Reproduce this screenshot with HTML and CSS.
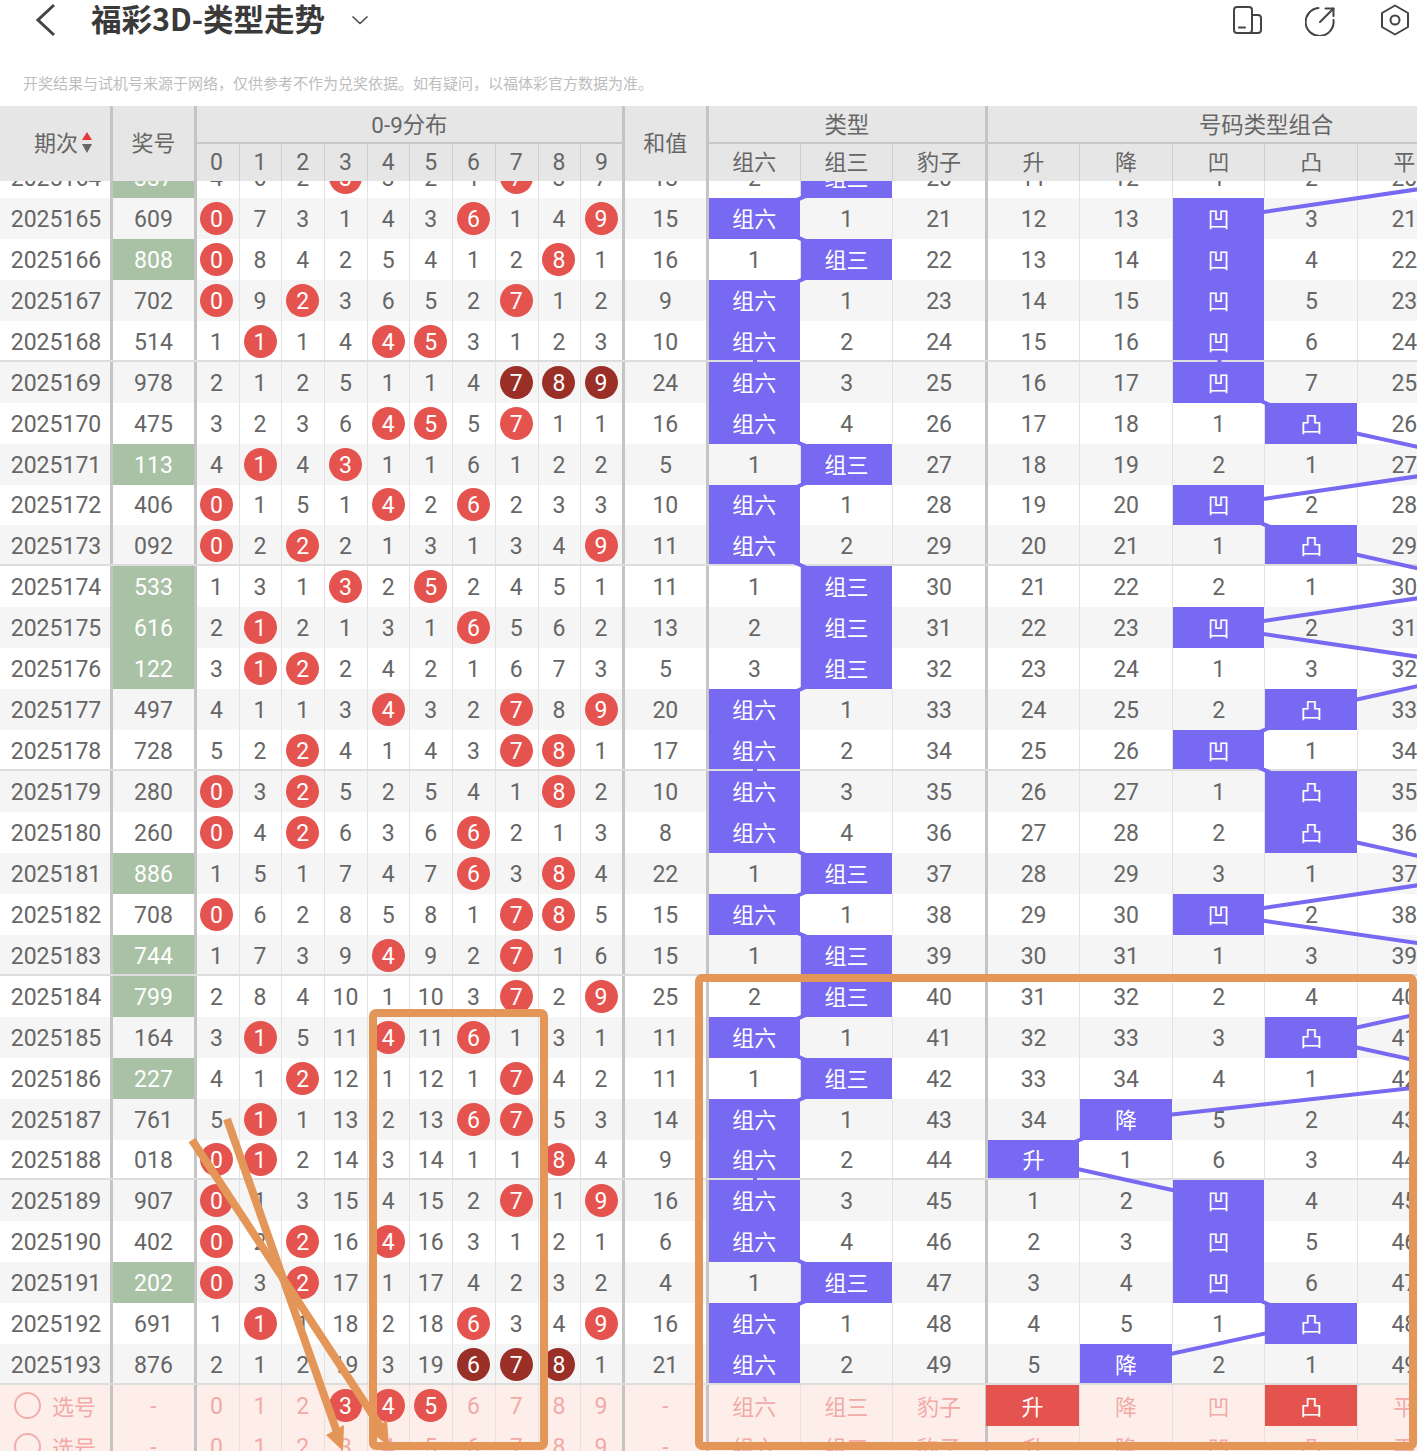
FILE: index.html
```html
<!DOCTYPE html>
<html lang="zh-CN">
<head>
  <meta charset="UTF-8" />
  <meta name="viewport" content="width=device-width, initial-scale=1" />
  <title>福彩3D-类型走势</title>
  <link rel="stylesheet" href="styles.css">
</head>
<body>
  <div class="page">
    <header class="topbar">
      <svg class="icon-back" viewBox="0 0 20 34"><path d="M18 2 L2 17 L18 32" /></svg>
      <h1 class="title">福彩3D-类型走势</h1>
      <svg class="icon-caret" viewBox="0 0 18 10"><path d="M1.5 1.5 L9 8.5 L16.5 1.5" /></svg>
      <div class="actions">
        <svg class="icon-action" viewBox="0 0 30 30">
          <rect x="2" y="2" width="18" height="26" rx="3" />
          <path d="M20 10 H26 Q29 10 29 13 V25 Q29 28 26 28 H17" />
          <path d="M7 22.5 H13" />
        </svg>
        <svg class="icon-action share" viewBox="0 0 30 30">
          <path d="M13.5 3 A14 14 0 1 0 28.5 15" />
          <path d="M15 17 L28.5 3.5" />
          <path d="M20.5 3.5 H28.5 V11" />
        </svg>
        <svg class="icon-action" viewBox="0 0 30 32">
          <path d="M15 1.5 L28 9 V23 L15 30.5 L2 23 V9 Z" />
          <circle cx="15" cy="16" r="4.5" />
        </svg>
      </div>
    </header>

    <p class="notice">开奖结果与试机号来源于网络，仅供参考不作为兑奖依据。如有疑问，以福体彩官方数据为准。</p>

    <section class="trend">
      <div class="head">
        <div class="hcell cn tall sep issue">期次<span class="sort"><i class="up"></i><i class="down"></i></span></div>
        <div class="hcell cn tall sep">奖号</div>
        <div class="hcell group span-10 sep">0-9分布</div>
        <div class="hcell cn tall sep">和值</div>
        <div class="hcell group span-3 sep">类型</div>
        <div class="hcell group span-6">号码类型组合</div>

        <div class="hcell num first">0</div><div class="hcell num">1</div><div class="hcell num">2</div><div class="hcell num">3</div><div class="hcell num">4</div>
        <div class="hcell num">5</div><div class="hcell num">6</div><div class="hcell num">7</div><div class="hcell num">8</div><div class="hcell sep">9</div>
        <div class="hcell cn">组六</div><div class="hcell cn">组三</div><div class="hcell cn sep">豹子</div>
        <div class="hcell cn">升</div><div class="hcell cn">降</div><div class="hcell cn">凹</div><div class="hcell cn">凸</div><div class="hcell cn">平</div><div class="hcell"></div>
      </div>
      <div class="body">
        <div class="rows" id="rows">
          <svg class="links" id="links"></svg>
        </div>
      </div>
    </section>

    <!-- hand drawn marks on top of the chart -->
    <svg class="marks" viewBox="0 0 1417 1451">
      <rect x="373" y="1013" width="171" height="433" rx="3" />
      <rect x="699" y="978" width="714" height="468" rx="3" />
      <path d="M192 1140 L384 1432" />
      <path d="M227 1119 L338 1435" />
      <polygon points="326,1435 344,1425 343,1451" />
      <polygon points="370,1432 387,1420 389,1446" />
    </svg>
  </div>
  <script src="table.js"></script>
</body>
</html>
```

FILE: styles.css
```css
/* Reset and base */
*, *::before, *::after {
  box-sizing: border-box;
}
html, body {
  margin: 0;
  padding: 0;
  background: #fff;
  font-family: Roboto, "Noto Sans CJK SC", sans-serif;
  color: #666;
}
.page {
  position: relative;
  width: 1417px;
  height: 1451px;
  overflow: hidden;
}

/* Top bar */
.topbar {
  display: flex;
  align-items: center;
  height: 40px;
  padding-left: 36px;
}
.icon-back {
  width: 20px;
  height: 34px;
  fill: none;
  stroke: #444;
  stroke-width: 3;
}
.title {
  margin: -5px 0 0 35px;
  font-family: "Noto Sans CJK SC", sans-serif;
  font-size: 30.5px;
  font-weight: 700;
  line-height: 34px;
  color: #3a3a3a;
  white-space: nowrap;
}
.icon-caret {
  width: 18px;
  height: 10px;
  margin-left: 26px;
  fill: none;
  stroke: #444;
  stroke-width: 1.5;
}
.actions {
  display: flex;
  align-items: center;
  gap: 42.5px;
  margin-left: auto;
  padding-right: 7px;
}
.icon-action {
  width: 30px;
  height: 32px;
  fill: none;
  stroke: #444;
  stroke-width: 2;
  stroke-linejoin: round;
  stroke-linecap: round;
}
.icon-action.share {
  margin-right: 3px;
}

.notice {
  margin: 0;
  padding: 33px 0 13px 23px;
  font-family: "Noto Sans CJK SC", sans-serif;
  font-size: 15px;
  line-height: 20px;
  color: #bdbdbd;
  white-space: nowrap;
}

/* Chart */
.trend {
  --cols: 113px 84px repeat(9, 42.7px) 43.7px 84px 92px 92.5px 94.5px 92.5px 92.5px 92.5px 93px 93px 93px;
  width: 100%;
  overflow: hidden;
}
.head {
  display: grid;
  grid-template-columns: var(--cols);
  grid-template-rows: 38px 37px;
  width: max-content;
  background: #e6e6e6;
  font-size: 23px;
}
.hcell {
  display: flex;
  align-items: center;
  justify-content: center;
  border-right: 1px solid #cfcfcf;
  white-space: nowrap;
}
.hcell.num {
  padding-right: 1px;
}
.hcell.num.first {
  padding-right: 3px;
}
.hcell.cn {
  padding-bottom: 6px;
  font-size: 22px;
}
.hcell.sep {
  border-right: 3px solid #c4c4c4;
}
.hcell.tall {
  grid-row: span 2;
}
.hcell.group {
  padding-bottom: 3px;
  border-bottom: 2px solid #c8c8c8;
  font-size: 22.4px;
}
.hcell.span-10 { grid-column: span 10; }
.hcell.span-3 { grid-column: span 3; }
.hcell.span-6 { grid-column: span 6; border-right: 0; }
.hcell.issue {
  justify-content: flex-start;
  gap: 4px;
  padding-left: 34px;
}
.sort {
  display: flex;
  flex-direction: column;
  gap: 4px;
  margin-top: 4px;
}
.sort i {
  display: block;
  width: 0;
  height: 0;
  border-left: 5.5px solid transparent;
  border-right: 5.5px solid transparent;
}
.sort .up { border-bottom: 8px solid #e53935; }
.sort .down { border-top: 9px solid #666; }

.body {
  height: 1270px;
  overflow: hidden;
}
.rows {
  position: relative;
  width: max-content;
  margin-top: -24px;
}
.links {
  position: absolute;
  left: 0;
  top: 0;
  z-index: 1;
  width: 100%;
  height: 100%;
  pointer-events: none;
}
.links line {
  stroke: #7769f1;
  stroke-width: 4;
}

.row {
  display: grid;
  grid-template-columns: var(--cols);
  height: 40.95px;
  font-size: 23px;
  background: #fff;
}
.row:nth-child(odd) {
  background: #f5f5f5;
}
.row.group-end {
  border-bottom: 2px solid #ddd;
}
.cell {
  display: flex;
  align-items: center;
  justify-content: center;
  padding-top: 2px;
  border-right: 1px solid #e2e2e2;
  white-space: nowrap;
}
.row.group-end .cell {
  padding-top: 4px;
}
.cell.sep {
  border-right: 3px solid #c4c4c4;
}
.cell.no {
  padding-left: 2px;
}
.cell.digit {
  padding-right: 1px;
}
.cell.digit.first {
  padding-right: 3px;
}
.cell.pair {
  background: #a9c2a5;
  color: #fff;
}
.row .cell.hit {
  position: relative;
  z-index: 2;
  padding: 0 0 3px;
  background: #7769f1;
  border-right-color: transparent;
  background-clip: padding-box;
  color: #fff;
  font-size: 22px;
}
.row.group-end .cell.hit {
  padding: 0 0 1px;
}
.ball {
  display: flex;
  align-items: center;
  justify-content: center;
  width: 33px;
  height: 33px;
  margin-top: -2px;
  padding-top: 2px;
  border-radius: 50%;
  background: #e5534f;
  color: #fff;
}
.ball.chain {
  background: #992f27;
}

/* Pick rows at the bottom */
.row.pick {
  background: #fdeeea;
  color: #f2aaa7;
}
.cell.cn {
  padding: 0 0 1px;
  font-size: 22px;
}
.cell.on {
  position: relative;
  padding: 0 0 1px;
  background: #e5534f;
  color: #fff;
  font-size: 22px;
}
.cell.on.pull {
  margin-left: -2px;
}
.cell.choose {
  justify-content: flex-start;
  gap: 11px;
  padding: 0 0 1px 14px;
  font-size: 22px;
}
.radio {
  width: 27px;
  height: 27px;
  border: 2px solid #f0aeac;
  border-radius: 50%;
}

/* Orange marks */
.marks {
  position: absolute;
  left: 0;
  top: 0;
  z-index: 10;
  width: 100%;
  height: 100%;
  pointer-events: none;
  fill: none;
  stroke: #e39658;
  stroke-width: 8;
}
.marks polygon {
  fill: #e39658;
  stroke: none;
}
```

FILE: table.js
```js
// Builds the trend rows from the draw list, the omission counters are derived from it
(function () {
  const rowsEl = document.getElementById('rows');
  const linksEl = document.getElementById('links');

  const draws = ['337', '609', '808', '702', '514', '978', '475', '113', '406', '092',
    '533', '616', '122', '497', '728', '280', '260', '886', '708', '744',
    '799', '164', '227', '761', '018', '907', '402', '202', '691', '876'];
  const firstIssue = 2025164;

  // counters as they stood before the first row
  const digitMiss = [3, 5, 1, 0, 2, 1, 0, 0, 2, 6];
  const typeMiss = [1, 0, 19];
  const shapeMiss = [10, 11, 0, 1, 19];

  const typeNames = ['组六', '组三', '豹子'];
  const shapeNames = ['升', '降', '凹', '凸', '平'];

  function cell(parent, cls, text) {
    const el = document.createElement('div');
    el.className = 'cell ' + cls;
    if (text !== undefined) el.textContent = text;
    parent.appendChild(el);
    return el;
  }

  function digitCell(parent, n) {
    return cell(parent, 'digit' + (n === 0 ? ' first' : '') + (n === 9 ? ' sep' : ''));
  }

  function ball(parent, text, chain) {
    const el = document.createElement('span');
    el.className = chain ? 'ball chain' : 'ball';
    el.textContent = text;
    parent.appendChild(el);
  }

  function shapeOf(d) {
    const [a, b, c] = d;
    if (a < b && b < c) return 0;
    if (a > b && b > c) return 1;
    if (b < a && b < c) return 2;
    if (b > a && b > c) return 3;
    return 5; // hit sits in the column off screen
  }

  draws.forEach(function (draw, i) {
    const d = draw.split('').map(Number);
    const row = document.createElement('div');
    row.className = 'row';
    if ((firstIssue + i) % 5 === 3) row.classList.add('group-end');

    const isPair = new Set(d).size < 3;
    const sorted = d.slice().sort((a, b) => a - b);
    const isChain = !isPair && sorted[2] - sorted[0] === 2;

    cell(row, 'sep no', firstIssue + i);
    cell(row, 'sep' + (isPair ? ' pair' : ''), draw);

    for (let n = 0; n < 10; n++) {
      const el = digitCell(row, n);
      if (d.includes(n)) {
        digitMiss[n] = 0;
        ball(el, n, isChain);
      } else {
        digitMiss[n]++;
        el.textContent = digitMiss[n];
      }
    }

    cell(row, 'sep', d[0] + d[1] + d[2]);

    const type = isPair ? 1 : 0;
    typeNames.forEach(function (name, t) {
      const cls = 'type' + (t === 2 ? ' sep' : '');
      if (t === type) {
        typeMiss[t] = 0;
        cell(row, cls + ' hit', name).dataset.link = 'type';
      } else {
        typeMiss[t]++;
        cell(row, cls, typeMiss[t]);
      }
    });

    const shape = shapeOf(d);
    shapeNames.forEach(function (name, s) {
      if (s === shape) {
        shapeMiss[s] = 0;
        cell(row, 'hit', name).dataset.link = 'shape';
      } else {
        shapeMiss[s]++;
        cell(row, '', shapeMiss[s]);
      }
    });
    const extra = cell(row, shape === 5 ? 'hit' : '');
    if (shape === 5) extra.dataset.link = 'shape';

    rowsEl.appendChild(row);
  });

  // Pick rows
  [[3, 4, 5], []].forEach(function (picked, p) {
    const row = document.createElement('div');
    row.className = 'row pick';

    const choose = cell(row, 'sep choose');
    const radio = document.createElement('span');
    radio.className = 'radio';
    choose.appendChild(radio);
    choose.appendChild(document.createTextNode('选号'));

    cell(row, 'sep', '-');
    for (let n = 0; n < 10; n++) {
      const el = digitCell(row, n);
      if (picked.includes(n)) ball(el, n, false);
      else el.textContent = n;
    }
    cell(row, 'sep', '-');
    typeNames.forEach((name, t) => cell(row, 'cn' + (t === 2 ? ' sep' : ''), name));
    shapeNames.forEach(function (name, s) {
      const on = p === 0 && (s === 0 || s === 3);
      cell(row, on ? (s === 0 ? 'on pull' : 'on') : 'cn', name);
    });
    rowsEl.appendChild(row);
  });

  // Links between the hits of neighbouring rows
  const svgNS = 'http://www.w3.org/2000/svg';
  ['type', 'shape'].forEach(function (kind) {
    const hits = rowsEl.querySelectorAll('[data-link="' + kind + '"]');
    for (let i = 1; i < hits.length; i++) {
      const a = hits[i - 1];
      const b = hits[i];
      const line = document.createElementNS(svgNS, 'line');
      line.setAttribute('x1', a.offsetLeft + a.offsetWidth / 2);
      line.setAttribute('y1', a.offsetTop + a.offsetHeight / 2);
      line.setAttribute('x2', b.offsetLeft + b.offsetWidth / 2);
      line.setAttribute('y2', b.offsetTop + b.offsetHeight / 2);
      linksEl.appendChild(line);
    }
  });
})();
```
